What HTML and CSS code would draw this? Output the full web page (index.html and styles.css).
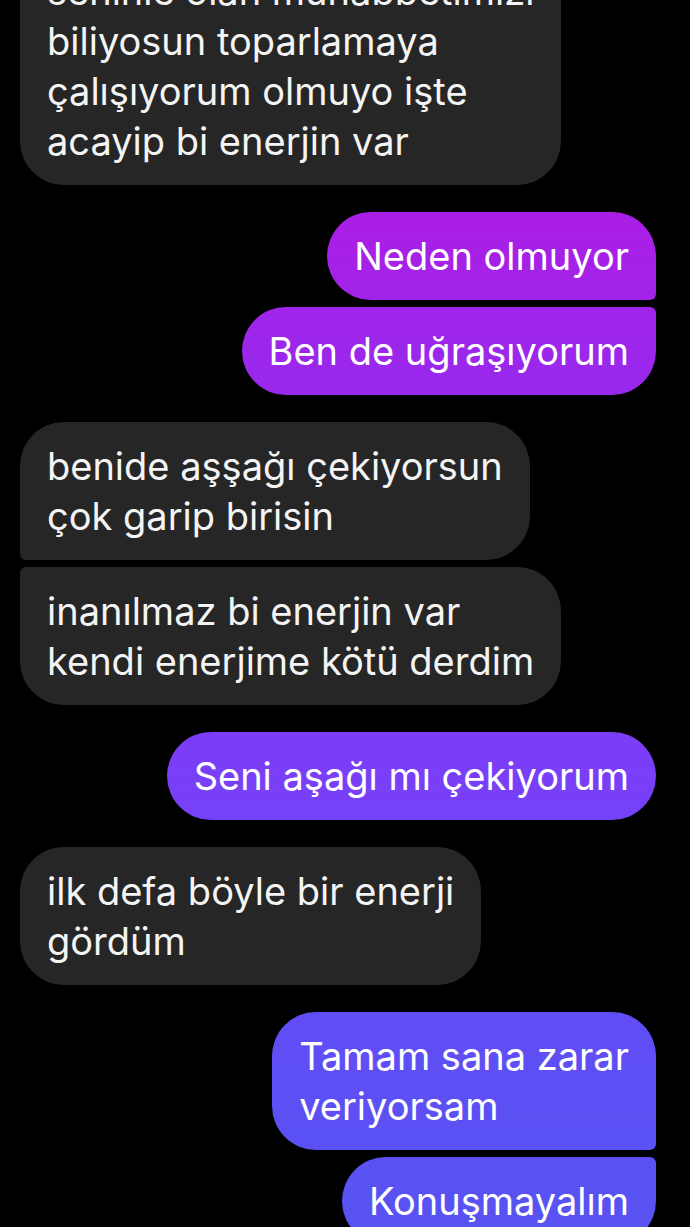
FILE: index.html
```html
<!DOCTYPE html>
<html lang="tr">
<head>
    <meta charset="UTF-8">
    <title>Mesajlar</title>
    <link rel="stylesheet" href="styles.css">
</head>
<body>
    <div class="thread">
        <div class="group in">
            <div class="msg">seninle olan muhabbetimizi<br>biliyosun toparlamaya<br>çalışıyorum olmuyo işte<br>acayip bi enerjin var</div>
        </div>

        <div class="group out">
            <div class="msg">Neden olmuyor</div>
            <div class="msg">Ben de uğraşıyorum</div>
        </div>

        <div class="group in">
            <div class="msg">benide aşşağı çekiyorsun<br>çok garip birisin</div>
            <div class="msg">inanılmaz bi enerjin var<br>kendi enerjime kötü derdim</div>
        </div>

        <div class="group out">
            <div class="msg">Seni aşağı mı çekiyorum</div>
        </div>

        <div class="group in">
            <div class="msg">ilk defa böyle bir enerji<br>gördüm</div>
        </div>

        <div class="group out">
            <div class="msg">Tamam sana zarar<br>veriyorsam</div>
            <div class="msg">Konuşmayalım</div>
        </div>
    </div>
</body>
</html>
```

FILE: styles.css
```css
body {
    margin: 0;
    background: #000;
    font-family: Inter, Roboto, "Liberation Sans", sans-serif;
    overflow: hidden;
}
.thread {
    display: flex;
    flex-direction: column;
    gap: 27px;
    padding: 0 34px 0 20px;
    margin-top: -53px;
}
.group {
    display: flex;
    flex-direction: column;
    gap: 7px;
}
.group.in {
    align-items: flex-start;
}
.group.out {
    align-items: flex-end;
}
.msg {
    font-size: 38px;
    line-height: 50px;
    padding: 19px 27px;
    border-radius: 44px;
    color: #f4f4f4;
    white-space: nowrap;
}
.in .msg {
    background: #262626;
}
/* the sent colour runs down the whole screen, like a fixed gradient */
.out .msg {
    color: #fff;
    background: linear-gradient(180deg, #ad1ce2 0, #a91fe5 230px, #9a28ec 370px, #7b3ef8 760px, #5f4ef5 1040px, #5853f2 1227px) fixed;
}
.in .msg:not(:last-child) {
    border-bottom-left-radius: 6px;
}
.in .msg:not(:first-child) {
    border-top-left-radius: 6px;
}
.out .msg:not(:last-child) {
    border-bottom-right-radius: 6px;
}
.out .msg:not(:first-child) {
    border-top-right-radius: 6px;
}
```
